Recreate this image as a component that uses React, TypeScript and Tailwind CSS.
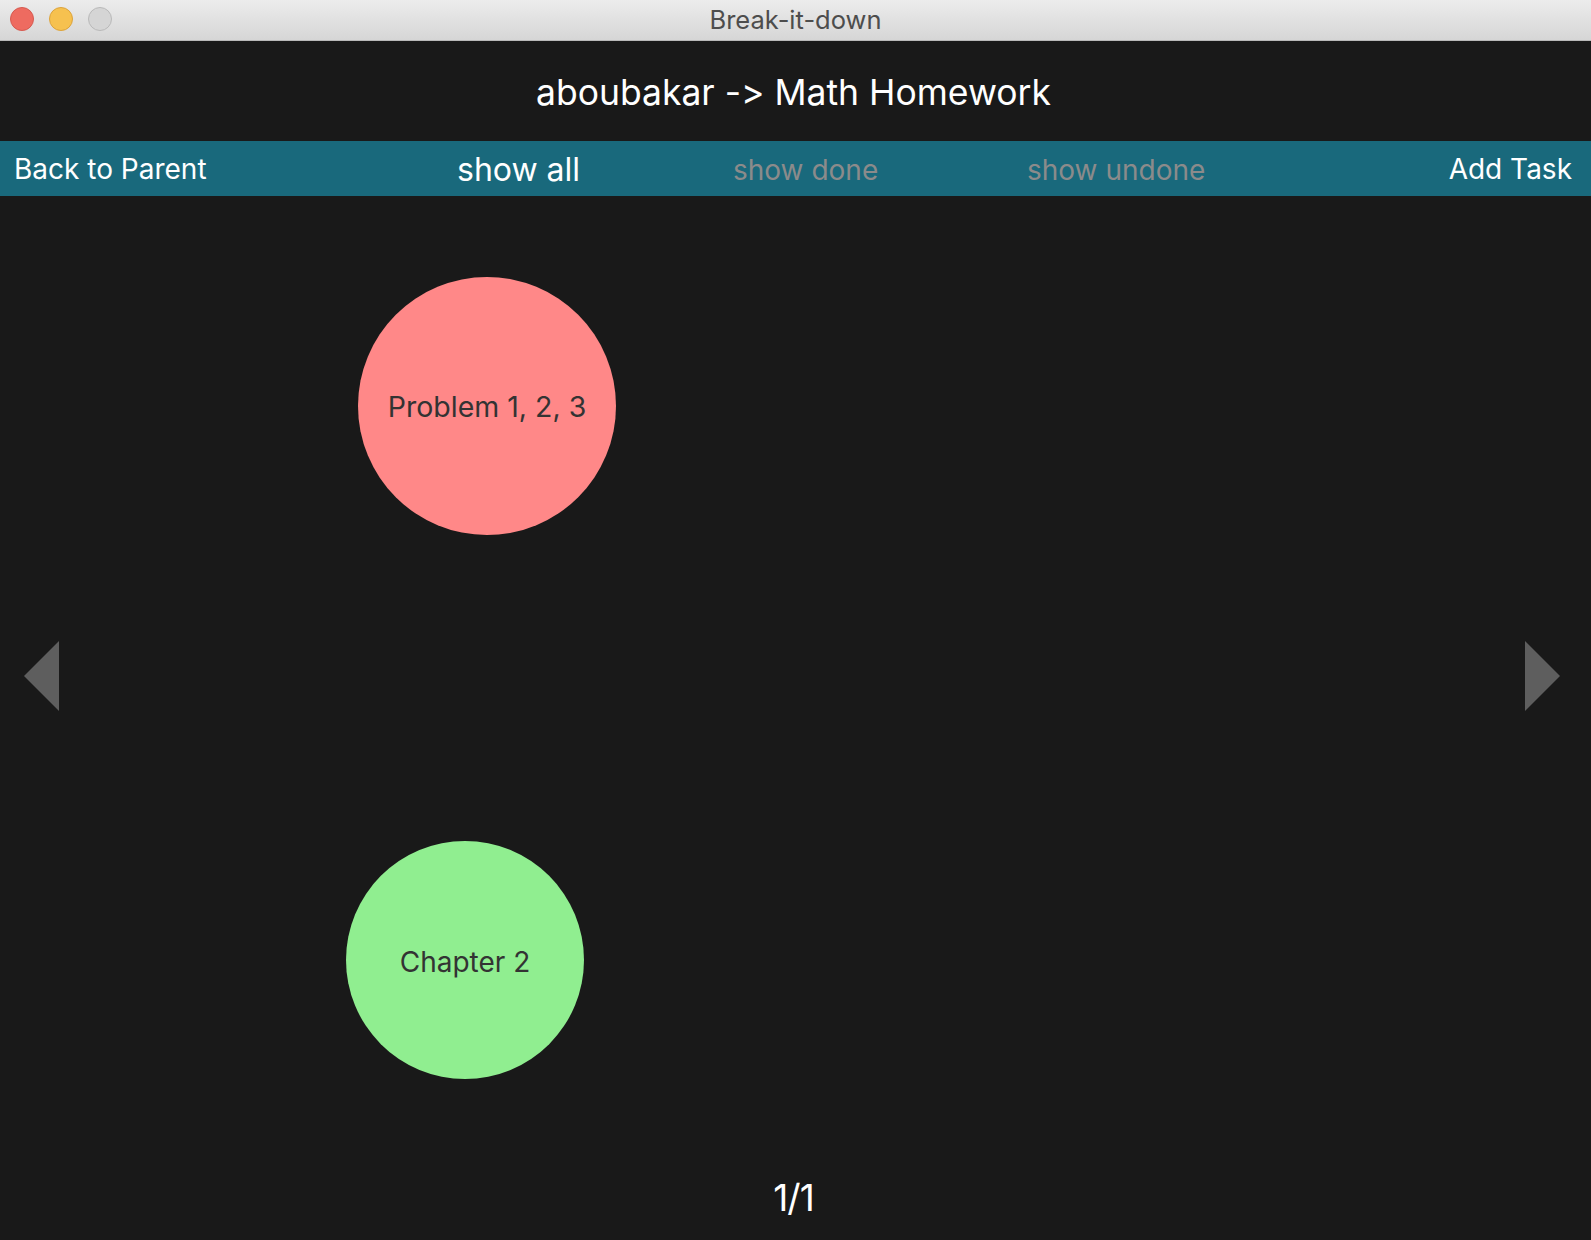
import { useState } from "react";

type Task = { id: number; name: string; done: boolean; left: number; top: number; size: number };

const tasks: Task[] = [
	{ id: 1, name: "Problem 1, 2, 3", done: false, left: 358, top: 81, size: 258 },
	{ id: 2, name: "Chapter 2", done: true, left: 346, top: 645, size: 238 },
];

const FONT = "font-['Inter','Roboto',sans-serif] [font-feature-settings:'calt'_0,'liga'_0]";

function TitleBar() {
	return (
		<div className="relative h-[41px] flex items-center justify-center bg-gradient-to-b from-[#ececec] to-[#d6d6d6] border-b border-[#b9b9b9]">
			<div className="absolute left-[10px] top-[7px] flex gap-[15px]">
				<span className="w-[24px] h-[24px] rounded-full bg-[#ee6b60] border border-[#d65a50]" />
				<span className="w-[24px] h-[24px] rounded-full bg-[#f6c14f] border border-[#dca33c]" />
				<span className="w-[24px] h-[24px] rounded-full bg-[#d5d5d5] border border-[#b9b9b9]" />
			</div>
			<span className="text-[25.5px] text-[#4d4d4d] leading-none">Break-it-down</span>
		</div>
	);
}

function Arrow({ dir }: { dir: "left" | "right" }) {
	return (
		<svg width="36" height="70" viewBox="0 0 36 70" className="block">
			{dir === "left" ? (
				<polygon points="0,35 35,0 35,70" fill="#5e5e5e" />
			) : (
				<polygon points="1,0 36,35 1,70" fill="#5e5e5e" />
			)}
		</svg>
	);
}

export default function App() {
	const [filter, setFilter] = useState<"all" | "done" | "undone">("all");

	const visible = tasks.filter((t) =>
		filter === "all" ? true : filter === "done" ? t.done : !t.done,
	);

	const filterClass = (f: typeof filter) =>
		filter === f ? "text-white text-[32px]" : "text-[#8b8b8b] text-[28px]";

	return (
		<div className={`w-[1591px] h-[1240px] bg-[#191919] flex flex-col overflow-hidden ${FONT}`}>
			<TitleBar />

			{/* Breadcrumb header */}
			<div className="h-[100px] flex items-center justify-center">
				<span className="text-white text-[35.5px] pt-[3px] pr-[4px]">aboubakar -&gt; Math Homework</span>
			</div>

			{/* Toolbar */}
			<div className="h-[55px] bg-[#19697c] flex items-center pl-[14px] pr-[19px] text-[28px] leading-none">
				<button type="button" className="text-white w-[443px] text-left">
					Back to Parent
				</button>
				<button type="button" onClick={() => setFilter("all")} className={`w-[276px] text-left pt-[2px] ${filterClass("all")}`}>
					show all
				</button>
				<button type="button" onClick={() => setFilter("done")} className={`w-[294px] text-left pt-[2px] ${filterClass("done")}`}>
					show done
				</button>
				<button type="button" onClick={() => setFilter("undone")} className={`text-left pt-[2px] ${filterClass("undone")}`}>
					show undone
				</button>
				<button type="button" className="ml-auto text-white">
					Add Task
				</button>
			</div>

			{/* Task canvas */}
			<div className="relative h-[959px] flex items-center justify-between pl-[24px] pr-[31px]">
				<Arrow dir="left" />
				{visible.map((t) => (
					<div
						key={t.id}
						className={`absolute rounded-full flex items-center justify-center pt-[3px] text-[#333333] ${
							t.done ? "bg-[#90ee90] text-[28px]" : "bg-[#ff8888] text-[28.5px]"
						}`}
						style={{ left: t.left, top: t.top, width: t.size, height: t.size }}
					>
						{t.name}
					</div>
				))}
				<Arrow dir="right" />
			</div>

			{/* Pager */}
			<div className="flex-1 flex items-center justify-center pr-[4px]">
				<span className="text-white text-[37px] tracking-tight">1/1</span>
			</div>
		</div>
	);
}
